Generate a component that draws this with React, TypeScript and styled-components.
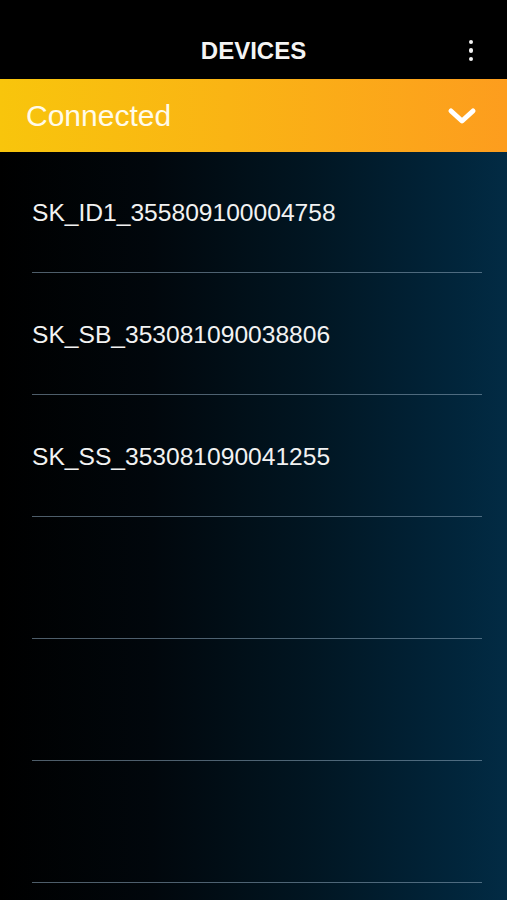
import React from "react";
import styled, { createGlobalStyle } from "styled-components";

const Global = createGlobalStyle`
  html, body { margin: 0; padding: 0; background: #000; }
  body { font-family: "Liberation Sans", Arial, sans-serif; }
  * { box-sizing: border-box; }
`;

const Screen = styled.div`
  width: 507px;
  height: 900px;
  display: flex;
  flex-direction: column;
  overflow: hidden;
  background: linear-gradient(to right, #000000 0%, #01070c 30%, #011521 60%, #01253b 90%, #022b44 100%);
`;

const TitleBar = styled.header`
  height: 79px;
  flex: none;
  background: #000;
  display: grid;
  grid-template-columns: 1fr auto 1fr;
  align-items: center;
  padding-top: 22px;
`;

const Title = styled.h1`
  grid-column: 2;
  margin: 0;
  color: #f4f4f4;
  font-size: 24px;
  font-weight: 700;
  letter-spacing: 0;
`;

const MenuButton = styled.button`
  grid-column: 3;
  justify-self: end;
  margin-right: 26px;
  width: 20px;
  height: 30px;
  border: 0;
  background: transparent;
  padding: 0;
  display: flex;
  flex-direction: column;
  align-items: center;
  justify-content: center;
  gap: 4px;
`;

const Dot = styled.span`
  width: 4.5px;
  height: 4.5px;
  border-radius: 50%;
  background: #f2f2f2;
`;

const StatusBar = styled.div`
  height: 73px;
  flex: none;
  background: linear-gradient(to right, #f8c50c 0%, #fab414 45%, #fd9d1e 100%);
  display: flex;
  align-items: center;
  justify-content: space-between;
  padding: 0 30px 0 26px;
`;

const StatusLabel = styled.span`
  color: #fffbea;
  font-size: 30px;
  font-weight: 400;
`;

const List = styled.ul`
  list-style: none;
  margin: 0;
  padding: 0 25px 0 32px;
`;

const Row = styled.li`
  height: 122px;
  display: flex;
  align-items: center;
  border-bottom: 1.5px solid rgba(130, 155, 175, 0.6);
  padding-top: 2px;
  color: #f2f2f2;
  font-size: 24.6px;
  &:first-child { height: 121px; }
`;

const devices = [
  "SK_ID1_355809100004758",
  "SK_SB_353081090038806",
  "SK_SS_353081090041255",
  "",
  "",
  "",
];

export default function App() {
  return (
    <>
      <Global />
      <Screen>
        <TitleBar>
          <Title>DEVICES</Title>
          <MenuButton aria-label="menu">
            <Dot />
            <Dot />
            <Dot />
          </MenuButton>
        </TitleBar>
        <StatusBar>
          <StatusLabel>Connected</StatusLabel>
          <svg width="30" height="20" viewBox="0 0 30 20">
            <path d="M4 5 L15 15 L26 5" fill="none" stroke="#fff" strokeWidth="5" strokeLinecap="round" strokeLinejoin="round" />
          </svg>
        </StatusBar>
        <List>
          {devices.map((d, i) => (
            <Row key={i}>{d}</Row>
          ))}
        </List>
      </Screen>
    </>
  );
}
